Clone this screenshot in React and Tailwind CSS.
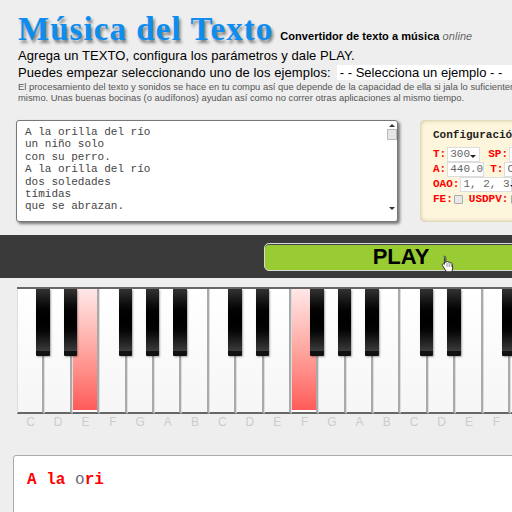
import { useState } from "react";

const POEM = ["A la orilla del río", "un niño solo", "con su perro.", "A la orilla del río", "dos soledades", "tímidas", "que se abrazan."];
const WHITE = ["C", "D", "E", "F", "G", "A", "B", "C", "D", "E", "F", "G", "A", "B", "C", "D", "E", "F", "G"];
const BLACK = [1, 2, 4, 5, 6, 8, 9, 11, 12, 13, 15, 16, 18];
const KEY_W = 27.4;

function HandCursor() {
  return (
    <svg width="14" height="18" viewBox="0 0 14 18" className="absolute left-[441px] top-[20px]">
      <path
        d="M3.5 1.2c.8 0 1.3.6 1.3 1.4v5l.5-.9c.8-.4 1.6-.2 1.9.5.8-.4 1.6-.2 1.9.6.9-.3 1.7.1 1.9.9l.8 4.3c0 1.6-.6 2.9-1.4 3.8H5.4L1.6 10.7c-.5-.8-.3-1.5.3-1.8.6-.3 1.1-.1 1.5.4V2.6c0-.8-.7-1.4.1-1.4z"
        fill="#fff"
        stroke="#333"
        strokeWidth="1"
        strokeLinejoin="round"
      />
      <path d="M6 8v4M8.2 8v4M10.3 8.5V12" stroke="#777" strokeWidth="0.8" />
    </svg>
  );
}

function Field({ children, className }) {
  return (
    <span className={`flex h-[15px] shrink-0 items-center whitespace-nowrap border border-[#ddd] bg-white pl-[2px] font-normal text-[#666] ${className}`}>
      {children}
    </span>
  );
}

function Caret() {
  return <span className="ml-auto mr-[3px] mt-[3px] border-x-[3px] border-t-[3px] border-x-transparent border-t-[#222]" />;
}

function Piano() {
  return (
    <div className="relative ml-[17px] mt-[9px] w-[530px]">
      <div className="flex h-[127px] border-t-2 border-[#666]">
        {WHITE.map((note, i) => {
          const pressed = i === 2 || i === 10;
          return (
            <div
              key={i}
              className={`h-full w-[27.4px] shrink-0 border-r-2 border-b-2 border-l border-r-[#aaa] border-b-[#666] border-l-[#ddd] ${
                pressed
                  ? "bg-gradient-to-b from-[#ffe8e8] to-[#ff5656] shadow-[inset_0_-2px_0_#fff]"
                  : "bg-gradient-to-b from-white to-[#f6f6f6]"
              }`}
            />
          );
        })}
      </div>
      {BLACK.map((n) => (
        <div
          key={n}
          className="absolute top-[2px] h-[67px] w-[13.4px] rounded-b-[1px] border-b-[5px] border-[#111] bg-gradient-to-b from-[#333] via-black to-[#3c3c3c] shadow-[1px_1px_2px_rgba(0,0,0,0.35)]"
          style={{ left: n * KEY_W - 8 }}
        />
      ))}
      <div className="mt-[1px] flex h-[14px] text-[12px] leading-[14px] text-[#ccc]">
        {WHITE.map((note, i) => (
          <span key={i} className="w-[27.4px] shrink-0 text-center">
            {note}
          </span>
        ))}
      </div>
    </div>
  );
}

export default function App() {
  const [sample] = useState("- - Selecciona un ejemplo - -");

  return (
    <div className="relative h-[512px] w-[512px] overflow-hidden bg-[#eeeeee] font-['Liberation_Sans',Arial,sans-serif] text-black">
      {/* Header */}
      <div className="whitespace-nowrap pl-[18px] pt-[11px]">
        <div className="flex h-[36px] items-baseline gap-[7px]">
          <h1 className="font-['Liberation_Serif',serif] text-[33px] font-bold leading-[36px] tracking-[1.06px] text-[#0d8df0] [text-shadow:2px_3px_3px_rgba(0,0,0,0.45)]">
            Música del Texto
          </h1>
          <span className="text-[11px] font-bold tracking-[0.05px]">
            Convertidor de texto a música <em className="font-normal text-[#666]">online</em>
          </span>
        </div>
        <p className="text-[13px] leading-[18px] tracking-[0.07px]">Agrega un TEXTO, configura los parámetros y dale PLAY.</p>
        <div className="flex h-[15px] items-center text-[13px] tracking-[0.1px]">
          <span>Puedes empezar seleccionando uno de los ejemplos:</span>
          <span className="ml-[6px] flex h-[15px] w-[200px] items-center bg-white pl-[3px] tracking-normal">{sample}</span>
        </div>
        <p className="mt-[1px] text-[9.4px] leading-[11px] text-[#555]">
          El procesamiento del texto y sonidos se hace en tu compu así que depende de la capacidad de ella si jala lo suficientemente rápido.
          <br />
          mismo. Unas buenas bocinas (o audífonos) ayudan así como no correr otras aplicaciones al mismo tiempo.
        </p>
      </div>

      {/* Text and config */}
      <div className="ml-[16px] mt-[17px] flex h-[102px] items-stretch gap-[22px]">
        <div className="flex w-[382px] shrink-0 rounded-[3px] border border-[#777] bg-white shadow-[2px_2px_3px_rgba(0,0,0,0.5)]">
          <div className="flex-1 pl-[8px] pt-[5px] font-['Liberation_Mono',monospace] text-[11px] leading-[12.4px] text-[#444]">
            {POEM.map((line, i) => (
              <div key={i}>{line}</div>
            ))}
          </div>
          <div className="flex w-[11px] flex-col items-center pb-[3px] pt-[3px]">
            <span className="border-x-[3px] border-b-[3px] border-x-transparent border-b-[#333]" />
            <span className="mt-[2px] h-[11px] w-[10px] border border-[#bbb] bg-[#e6e6e6]" />
            <span className="mb-[8px] mt-auto border-x-[3px] border-t-[3px] border-x-transparent border-t-[#333]" />
          </div>
        </div>
        <div className="w-[140px] shrink-0 rounded-[5px] bg-[#fdf6dc] pl-[13px] pt-[8px] font-['Liberation_Mono',monospace] text-[11px] font-bold text-[#f00] shadow-[inset_0_0_4px_rgba(110,100,50,0.45)]">
          <div className="whitespace-nowrap text-[11px] leading-[14px] text-[#222]">Configuración</div>
          <div className="mt-[5px] flex flex-col">
            <div className="flex h-[15px] items-center gap-[1px]">
              <span>T:</span>
              <Field className="w-[33px]">300<Caret /></Field>
              <span className="ml-[7px]">SP:</span>
              <Field className="w-[40px]">300</Field>
            </div>
            <div className="flex h-[15px] items-center gap-[1px]">
              <span>A:</span>
              <Field className="w-[37px]">440.0</Field>
              <span className="ml-[5px]">T:</span>
              <Field className="w-[40px]">C</Field>
            </div>
            <div className="flex h-[15px] items-center gap-[1px]">
              <span>OAO:</span>
              <Field className="w-[52px]">1, 2, 3<Caret /></Field>
            </div>
            <div className="flex h-[15px] items-center gap-[1px]">
              <span>FE:</span>
              <span className="h-[9px] w-[9px] shrink-0 rounded-[1px] border border-[#aaa] bg-[#e8e8e8]" />
              <span className="ml-[5px]">USDPV:</span>
              <span className="ml-[2px] h-[9px] w-[9px] shrink-0 rounded-[1px] border border-[#aaa] bg-[#e8e8e8]" />
            </div>
          </div>
        </div>
      </div>

      {/* Play band */}
      <div className="relative mt-[13px] flex h-[43px] items-center bg-[#3a3a3a] pl-[264px]">
        <button className="h-[28px] w-[300px] shrink-0 rounded-l-[5px] border border-[#d8d8d8] bg-[#99cc33] text-[22px] font-bold leading-[26px] text-black shadow-[inset_0_1px_0_#444]">
          <span className="ml-[-26px] block">PLAY</span>
        </button>
        <HandCursor />
      </div>

      <Piano />

      {/* Output */}
      <div className="ml-[13px] mt-[26px] h-[80px] w-[530px] rounded-tl-[3px] border border-[#aaa] bg-white pl-[13px] pt-[15px] font-['Liberation_Mono',monospace] text-[16px] font-bold leading-[18px] text-[#f00]">
        A la <span className="font-normal text-[#667]">o</span>ri
      </div>
    </div>
  );
}
